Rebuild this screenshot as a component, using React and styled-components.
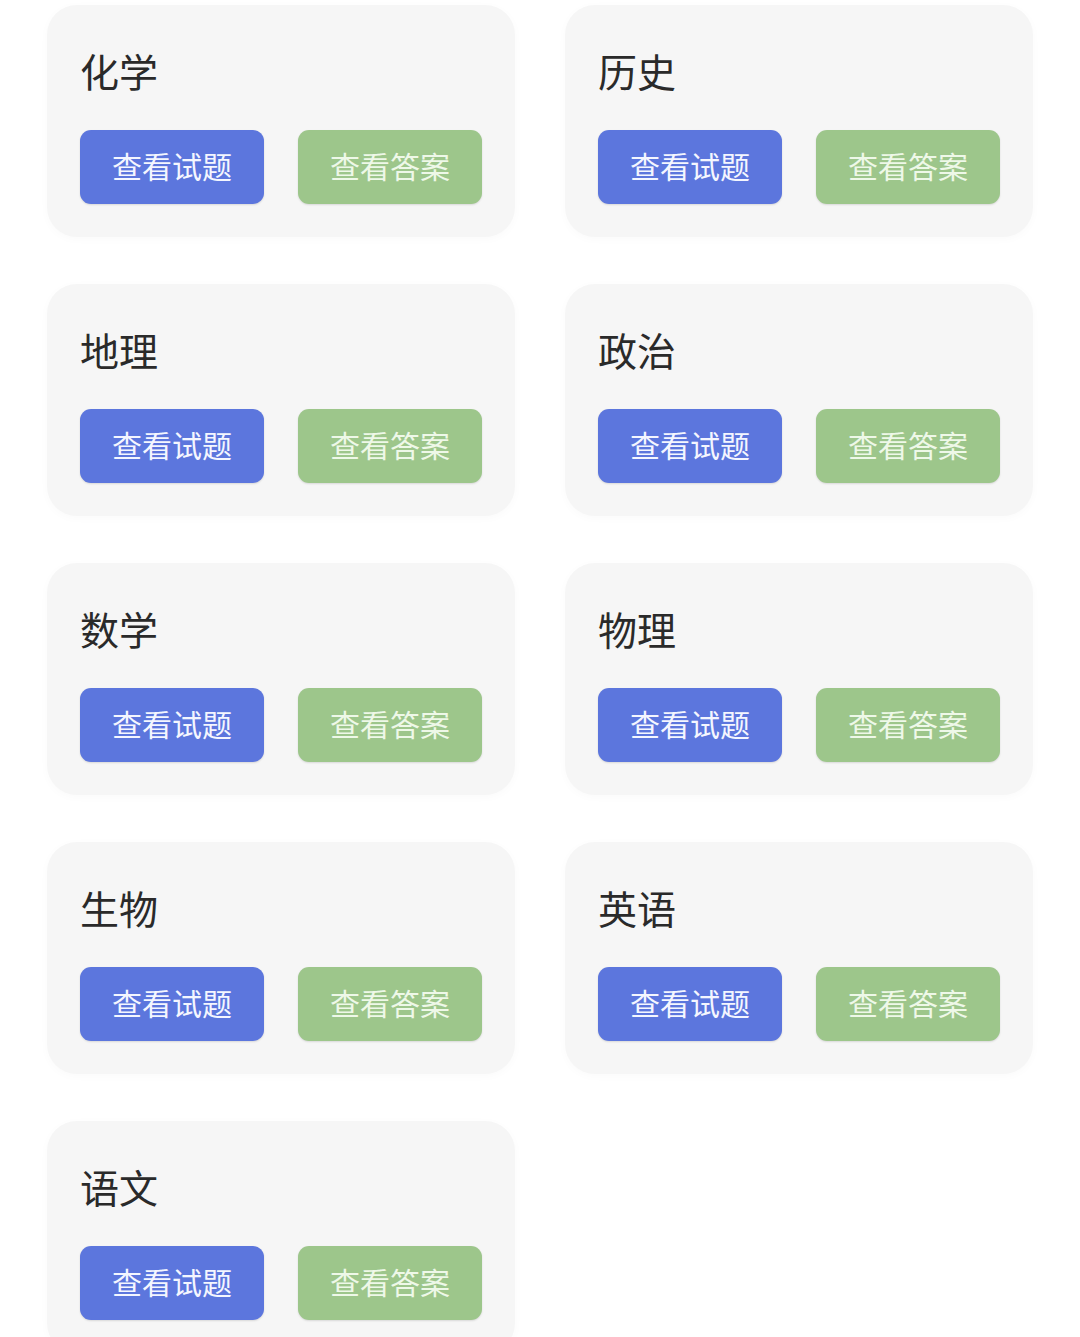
import React from "react";
import styled, { createGlobalStyle } from "styled-components";

const GlobalStyle = createGlobalStyle`
  html, body {
    margin: 0;
    padding: 0;
    background: #ffffff;
    font-family: "Noto Sans CJK SC", "Noto Sans", sans-serif;
  }
`;

const Page = styled.div`
  width: 1080px;
  height: 1337px;
  overflow: hidden;
  box-sizing: border-box;
  padding: 5px 0 0 47px;
  display: grid;
  grid-template-columns: 468px 468px;
  column-gap: 50px;
  row-gap: 47px;
  align-content: start;
`;

const Card = styled.div`
  height: 232px;
  box-sizing: border-box;
  padding: 45px 33px 34px 33px;
  background: #f6f6f6;
  border-radius: 30px;
  box-shadow: 0 2px 10px rgba(0, 0, 0, 0.025);
  display: flex;
  flex-direction: column;
`;

const Title = styled.div`
  font-size: 39px;
  line-height: 40px;
  color: #2a2a2a;
  padding-bottom: 2px;
`;

const Buttons = styled.div`
  margin-top: 38px;
  display: flex;
  gap: 34px;
`;

const Button = styled.div`
  width: 184px;
  height: 74px;
  box-sizing: border-box;
  padding-bottom: 4px;
  border-radius: 11px;
  display: flex;
  align-items: center;
  justify-content: center;
  font-size: 30px;
  background: ${(p) => (p.$kind === "answer" ? "#9dc68b" : "#5c76dd")};
  color: ${(p) => (p.$kind === "answer" ? "#eef8e8" : "#f4f6ff")};
  box-shadow: 0 1px 2px rgba(0, 0, 0, 0.12);
`;

const subjects = ["化学", "历史", "地理", "政治", "数学", "物理", "生物", "英语", "语文"];

const App = () => (
  <>
    <GlobalStyle />
    <Page>
      {subjects.map((name) => (
        <Card key={name}>
          <Title>{name}</Title>
          <Buttons>
            <Button>查看试题</Button>
            <Button $kind="answer">查看答案</Button>
          </Buttons>
        </Card>
      ))}
    </Page>
  </>
);

export default App;
